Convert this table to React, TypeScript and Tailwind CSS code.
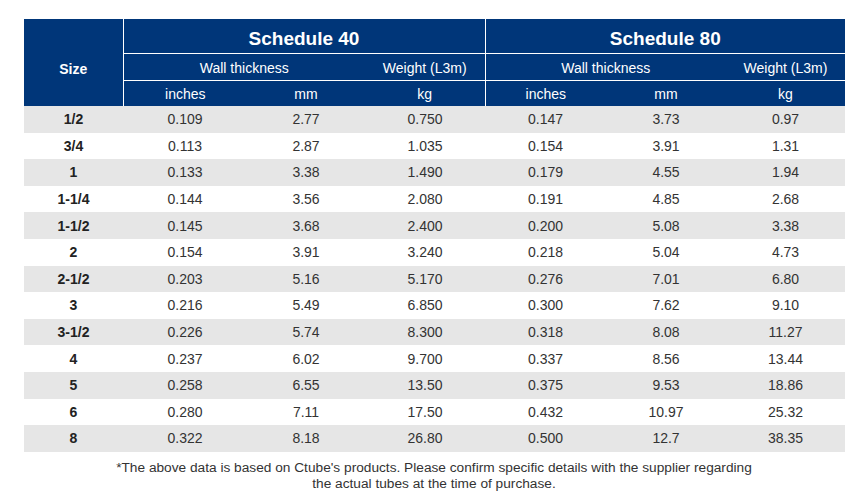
const rows: string[][] = [
  ["1/2", "0.109", "2.77", "0.750", "0.147", "3.73", "0.97"],
  ["3/4", "0.113", "2.87", "1.035", "0.154", "3.91", "1.31"],
  ["1", "0.133", "3.38", "1.490", "0.179", "4.55", "1.94"],
  ["1-1/4", "0.144", "3.56", "2.080", "0.191", "4.85", "2.68"],
  ["1-1/2", "0.145", "3.68", "2.400", "0.200", "5.08", "3.38"],
  ["2", "0.154", "3.91", "3.240", "0.218", "5.04", "4.73"],
  ["2-1/2", "0.203", "5.16", "5.170", "0.276", "7.01", "6.80"],
  ["3", "0.216", "5.49", "6.850", "0.300", "7.62", "9.10"],
  ["3-1/2", "0.226", "5.74", "8.300", "0.318", "8.08", "11.27"],
  ["4", "0.237", "6.02", "9.700", "0.337", "8.56", "13.44"],
  ["5", "0.258", "6.55", "13.50", "0.375", "9.53", "18.86"],
  ["6", "0.280", "7.11", "17.50", "0.432", "10.97", "25.32"],
  ["8", "0.322", "8.18", "26.80", "0.500", "12.7", "38.35"],
];

export default function App() {
  return (
    <div className="h-[496px] w-[868px] bg-white pt-[19px] font-['Liberation_Sans',Arial,sans-serif] text-[#333]">
      <table className="ml-[24px] w-[821px] table-fixed border-collapse text-center text-[14px] leading-[18px]">
        <colgroup>
          <col className="w-[99px]" />
          <col className="w-[124px]" />
          <col className="w-[118px]" />
          <col className="w-[120px]" />
          <col className="w-[121px]" />
          <col className="w-[120px]" />
          <col className="w-[119px]" />
        </colgroup>
        <thead className="bg-[#003679] text-white">
          <tr className="h-[34px]">
            <th rowSpan={3} className="border-r border-white p-0 pt-[12px] font-bold">
              Size
            </th>
            <th colSpan={3} className="border-b border-r border-white p-0 pt-[6px] text-[19px] leading-[22px] font-bold">
              Schedule 40
            </th>
            <th colSpan={3} className="border-b border-white p-0 pt-[6px] text-[19px] leading-[22px] font-bold">
              Schedule 80
            </th>
          </tr>
          <tr className="h-[27px]">
            <th colSpan={2} className="border-b border-white p-0 pt-[3px] font-normal">
              Wall thickness
            </th>
            <th className="border-b border-r border-white p-0 pt-[3px] font-normal">Weight (L3m)</th>
            <th colSpan={2} className="border-b border-white p-0 pt-[3px] font-normal">
              Wall thickness
            </th>
            <th className="border-b border-white p-0 pt-[3px] font-normal">Weight (L3m)</th>
          </tr>
          <tr className="h-[26px]">
            <th className="p-0 pt-[1px] font-normal">inches</th>
            <th className="p-0 pt-[1px] font-normal">mm</th>
            <th className="border-r border-white p-0 pt-[1px] font-normal">kg</th>
            <th className="p-0 pt-[1px] font-normal">inches</th>
            <th className="p-0 pt-[1px] font-normal">mm</th>
            <th className="p-0 pt-[1px] font-normal">kg</th>
          </tr>
        </thead>
        <tbody>
          {rows.map((r, i) => (
            <tr key={r[0]} className={i % 2 === 0 ? "h-[26.6px] bg-[#e6e6e6]" : "h-[26.6px] bg-white"}>
              {r.map((c, j) => (
                <td key={j} className={j === 0 ? "p-0 font-bold text-[#222]" : "p-0"}>
                  {c}
                </td>
              ))}
            </tr>
          ))}
        </tbody>
      </table>
      <p className="mt-[8px] text-center text-[13.7px] leading-[16px] text-[#333]">
        *The above data is based on Ctube's products. Please confirm specific details with the supplier regarding
        <br />
        the actual tubes at the time of purchase.
      </p>
    </div>
  );
}
